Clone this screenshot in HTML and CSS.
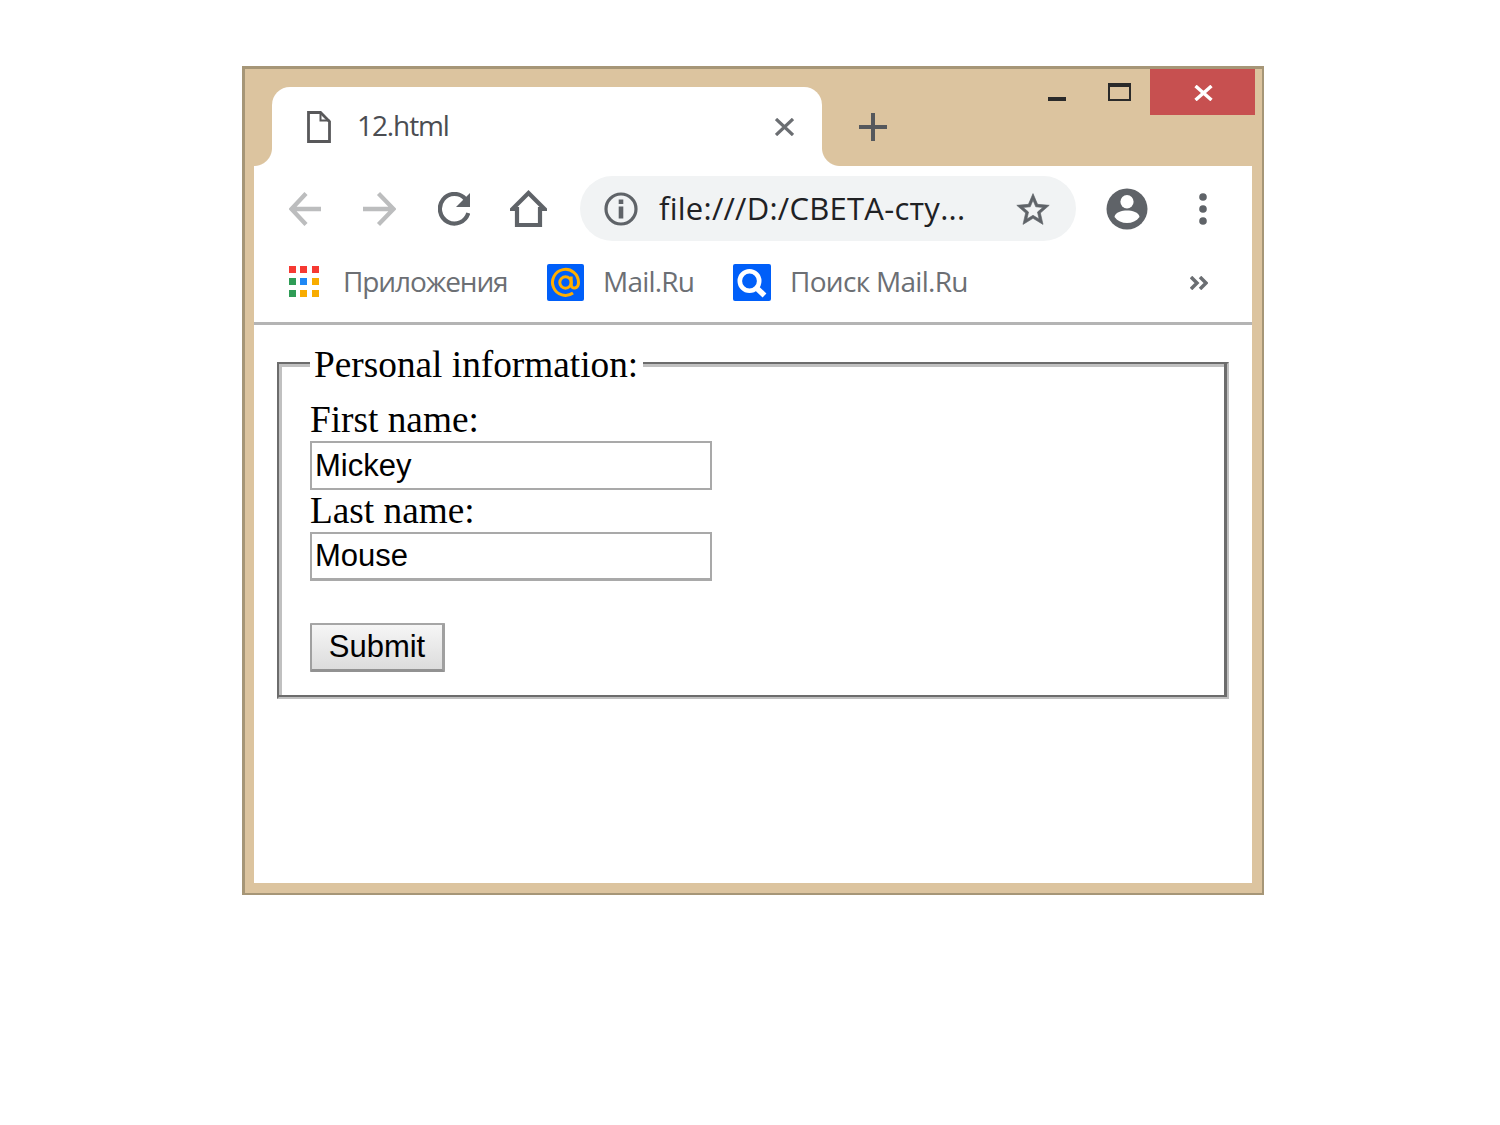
FILE: index.html
```html
<!DOCTYPE html>
<html lang="ru">
<head>
<meta charset="utf-8">
<title>12.html</title>
<link rel="stylesheet" href="styles.css">
</head>
<body>
<div class="window">
  <header class="titlebar">
    <div class="tab">
      <svg class="tab-doc" width="24" height="32" viewBox="0 0 24 32"><path d="M1.500 1.500H13.500L22.500 10.500V30.500H1.500Z" fill="none" stroke="#58585a" stroke-width="2.800"/><path d="M13.500 1.500V9.500H22.500" fill="none" stroke="#58585a" stroke-width="2"/></svg>
      <span class="tab-title">12.html</span>
      <svg class="tab-close" width="19" height="18" viewBox="0 0 19 18"><path d="M1 1L18 17M18 1L1 17" stroke="#6b6e72" stroke-width="3.300"/></svg>
    </div>
    <svg class="new-tab" width="28" height="28" viewBox="0 0 28 28"><path d="M14 0V28M0 14H28" stroke="#55585c" stroke-width="4"/></svg>
    <div class="controls">
      <span class="minimize"></span>
      <span class="maximize"></span>
      <span class="close"><svg width="19" height="16" viewBox="0 0 19 16"><path d="M1.500 1L17.500 15M17.500 1L1.500 15" stroke="#fff" stroke-width="3.400"/></svg></span>
    </div>
  </header>
  <main class="content">
    <nav class="toolbar">
      <svg class="back" width="32" height="34" viewBox="0 0 32 34"><path d="M32 17H3M17 1.500L2.500 17L17 32.500" fill="none" stroke="#bcbdbe" stroke-width="4.300"/></svg>
      <svg class="forward" width="33" height="34" viewBox="0 0 33 34"><path d="M0 17H30M15.500 1.500L30.500 17L15.500 32.500" fill="none" stroke="#bcbdbe" stroke-width="4.300"/></svg>
      <svg class="reload" width="32" height="34" viewBox="0 0 32 34"><path d="M27.500 7.200A14.500 14.800 0 1 0 30.300 21" fill="none" stroke="#5f6368" stroke-width="4.200"/><path d="M32 1V15H18Z" fill="#5f6368"/></svg>
      <svg class="home" width="37" height="38" viewBox="0 0 37 38"><path d="M7 35V19H2.500L18.500 3L34.500 19H30V35Z" fill="none" stroke="#5f6368" stroke-width="4.200"/></svg>
      <div class="address">
        <svg width="34" height="34" viewBox="0 0 34 34"><circle cx="17" cy="17" r="15" fill="none" stroke="#5f6368" stroke-width="3.200"/><path d="M17 7.500V12M17 14.500V26.500" stroke="#5f6368" stroke-width="4.600"/></svg>
        <span class="url">file:///D:/СВЕТА-сту...</span>
        <svg class="star" width="34" height="34" viewBox="1.500 1.500 21 20"><path fill="#5f6368" stroke="#5f6368" stroke-width=".4" d="M22 9.240l-7.190-.62L12 2 9.190 8.630 2 9.240l5.460 4.730L5.820 21 12 17.270 18.180 21l-1.630-7.030L22 9.240zM12 15.400l-3.760 2.270 1-4.280-3.320-2.880 4.380-.38L12 6.100l1.710 4.040 4.380.38-3.320 2.880 1 4.280L12 15.400z"/></svg>
      </div>
      <svg class="profile" width="42" height="42" viewBox="0 0 42 42"><circle cx="21" cy="21" r="20.500" fill="#5f6368"/><ellipse cx="21" cy="13.800" rx="6.600" ry="6.800" fill="#fff"/><path d="M8.500 29C9 24 16 22.500 21 22.500S33 24 33.500 29C30.500 33 26 35 21 35S11.500 33 8.500 29Z" fill="#fff"/></svg>
      <svg class="menu" width="8" height="32" viewBox="0 0 8 32"><g fill="#5f6368"><circle cx="4" cy="4" r="3.800"/><circle cx="4" cy="16" r="3.800"/><circle cx="4" cy="28" r="3.800"/></g></svg>
    </nav>
    <nav class="bookmarks">
      <svg class="apps" width="31" height="31" viewBox="0 0 31 31" shape-rendering="crispEdges"><path d="M0 0h7v7H0zM11 0h7v7h-7zM23 0h7v7h-7z" fill="#f63932"/><path d="M0 12h7v7H0zM0 24h7v7H0z" fill="#2f9c56"/><path d="M11 12h7v7h-7z" fill="#1e88f5"/><path d="M23 12h7v7h-7zM11 24h7v7h-7zM23 24h7v7h-7z" fill="#f8ac00"/></svg>
      <span class="mark apps-label">Приложения</span>
      <svg class="mailru" width="37" height="37" viewBox="0 0 37 37"><rect width="37" height="37" rx="2" fill="#005ff9"/><g fill="none" stroke="#ffae00" stroke-width="3"><circle cx="18.500" cy="18.500" r="5.700"/><path d="M24.200 12.500V20.500C24.200 26 31.500 25 31.500 18.500A13 13 0 1 0 26 29"/></g></svg>
      <span class="mark mail-label">Mail.Ru</span>
      <svg class="search" width="38" height="37" viewBox="0 0 38 37"><rect width="38" height="37" rx="2" fill="#005ff9"/><circle cx="16.500" cy="17" r="9.700" fill="none" stroke="#fff" stroke-width="4.600"/><path d="M23 23.500L31.500 31.500" stroke="#fff" stroke-width="5.500"/></svg>
      <span class="mark search-label">Поиск Mail.Ru</span>
      <svg class="more" width="18" height="14" viewBox="0 0 18 14"><path d="M1 1L7 7L1 13M10 1L16 7L10 13" fill="none" stroke="#6b6e72" stroke-width="3.500"/></svg>
    </nav>
    <form class="page">
      <fieldset class="personal">
        <legend class="legend">Personal information:</legend>
        <label class="label" for="first">First name:</label>
        <input class="field" id="first" type="text" value="Mickey">
        <label class="label" for="last">Last name:</label>
        <input class="field last" id="last" type="text" value="Mouse">
        <button class="submit" type="button">Submit</button>
      </fieldset>
    </form>
  </main>
</div>
</body>
</html>
```
FILE: styles.css
```css
* { box-sizing: border-box; }
body { margin: 0; padding: 66px 0 0 242px; background: #fff; }
svg { display: block; flex: none; }

.window {
  width: 1022px;
  height: 829px;
  display: flex;
  flex-direction: column;
  background: #dcc49f;
  border: solid #a69677;
  border-width: 3px 2px 2px 3px;
  font-family: "Open Sans", "Noto Sans", sans-serif;
}

.titlebar { height: 97px; display: flex; align-items: flex-end; padding-left: 27px; flex: none; }
.tab {
  position: relative;
  width: 550px;
  height: 79px;
  display: flex;
  align-items: center;
  padding: 0 28px 0 35px;
  background: #fff;
  border-radius: 18px 18px 0 0;
}
.tab::before, .tab::after {
  content: "";
  position: absolute;
  bottom: 0;
  width: 18px;
  height: 18px;
}
.tab::before { right: 100%; background: radial-gradient(circle at 0 0, transparent 17.5px, #fff 18.500px); }
.tab::after { left: 100%; background: radial-gradient(circle at 100% 0, transparent 17.5px, #fff 18.500px); }
.tab-title {
  margin-left: 26px;
  padding-bottom: 3px;
  font-size: 28px;
  line-height: 40px;
  letter-spacing: -1.1px;
  color: #4b4d52;
}
.tab-close { margin-left: auto; }
.new-tab { margin: 0 0 25px 37px; }
.controls { display: flex; align-self: flex-start; margin: 0 7px 0 auto; }
.minimize { width: 18px; height: 4px; margin: 28px 42px 0 0; background: #2a2a2a; }
.maximize { width: 23px; height: 18px; margin: 14px 19px 0 0; border: 2px solid #2a2a2a; border-top-width: 4px; }
.close { width: 105px; height: 46px; display: flex; justify-content: center; padding: 16px 0 0 2px; background: #c75050; }

.content { flex: 1; margin: 0 10px 10px 9px; background: #fff; }

.toolbar { height: 85px; display: flex; align-items: center; padding-left: 35px; }
.forward, .reload { margin-left: 42px; }
.home { margin-left: 40px; }
.address {
  width: 496px;
  height: 65px;
  display: flex;
  align-items: center;
  margin-left: 33px;
  padding: 0 26px 0 24px;
  background: #f1f3f4;
  border-radius: 33px;
}
.url { margin-left: 21px; padding-bottom: 1px; font-size: 31px; line-height: 42px; letter-spacing: .25px; color: #202124; white-space: nowrap; }
.star { margin-left: auto; }
.profile { margin-left: 30px; }
.menu { margin-left: 51px; }

.bookmarks {
  height: 74px;
  display: flex;
  align-items: center;
  padding: 0 44px 8px 35px;
  border-bottom: 3px solid #b4b4b4;
}
.apps { margin-bottom: 2px; }
.mark { padding-bottom: 3px; font-size: 28px; line-height: 40px; color: #6c6f74; white-space: nowrap; }
.apps-label { width: 204px; margin-left: 23px; letter-spacing: -1.1px; }
.mail-label { width: 130px; margin-left: 19px; letter-spacing: -.8px; }
.search-label { margin-left: 19px; letter-spacing: -.7px; }
.more { margin-left: auto; }

.page { padding: 17px 23px 0; }
.personal {
  margin: 0;
  padding: 15px 28px 25px 31px;
  border: 2px solid;
  border-color: #6c6c6c #c0c0c0 #c0c0c0 #6c6c6c;
  box-shadow: inset -3px -2px #6c6c6c, inset 3px 3px #c0c0c0;
  font: 37.3px/39px "Liberation Serif", serif;
  color: #000;
}
.legend { width: 333px; height: 42px; padding: 2px 0 0 4px; line-height: 42px; background: #fff; white-space: nowrap; }
.label { display: block; height: 42px; padding-top: 1px; }
.field {
  display: block;
  width: 402px;
  height: 49px;
  margin: 0;
  padding: 0 3px;
  border: 2px solid #a9a9a9;
  background: #fff;
  font: 31px "Liberation Sans", sans-serif;
  color: #000;
}
.last { border-bottom-width: 3px; }
.submit {
  display: block;
  width: 135px;
  height: 49px;
  margin-top: 42px;
  padding: 0;
  border: solid;
  border-width: 2px 3px 3px 2px;
  border-color: #a6a6a6 #a0a0a0 #929292 #a0a0a0;
  border-radius: 1px;
  background: linear-gradient(#f6f6f6, #dcdcdc);
  font: 31px "Liberation Sans", sans-serif;
  color: #000;
}
```
